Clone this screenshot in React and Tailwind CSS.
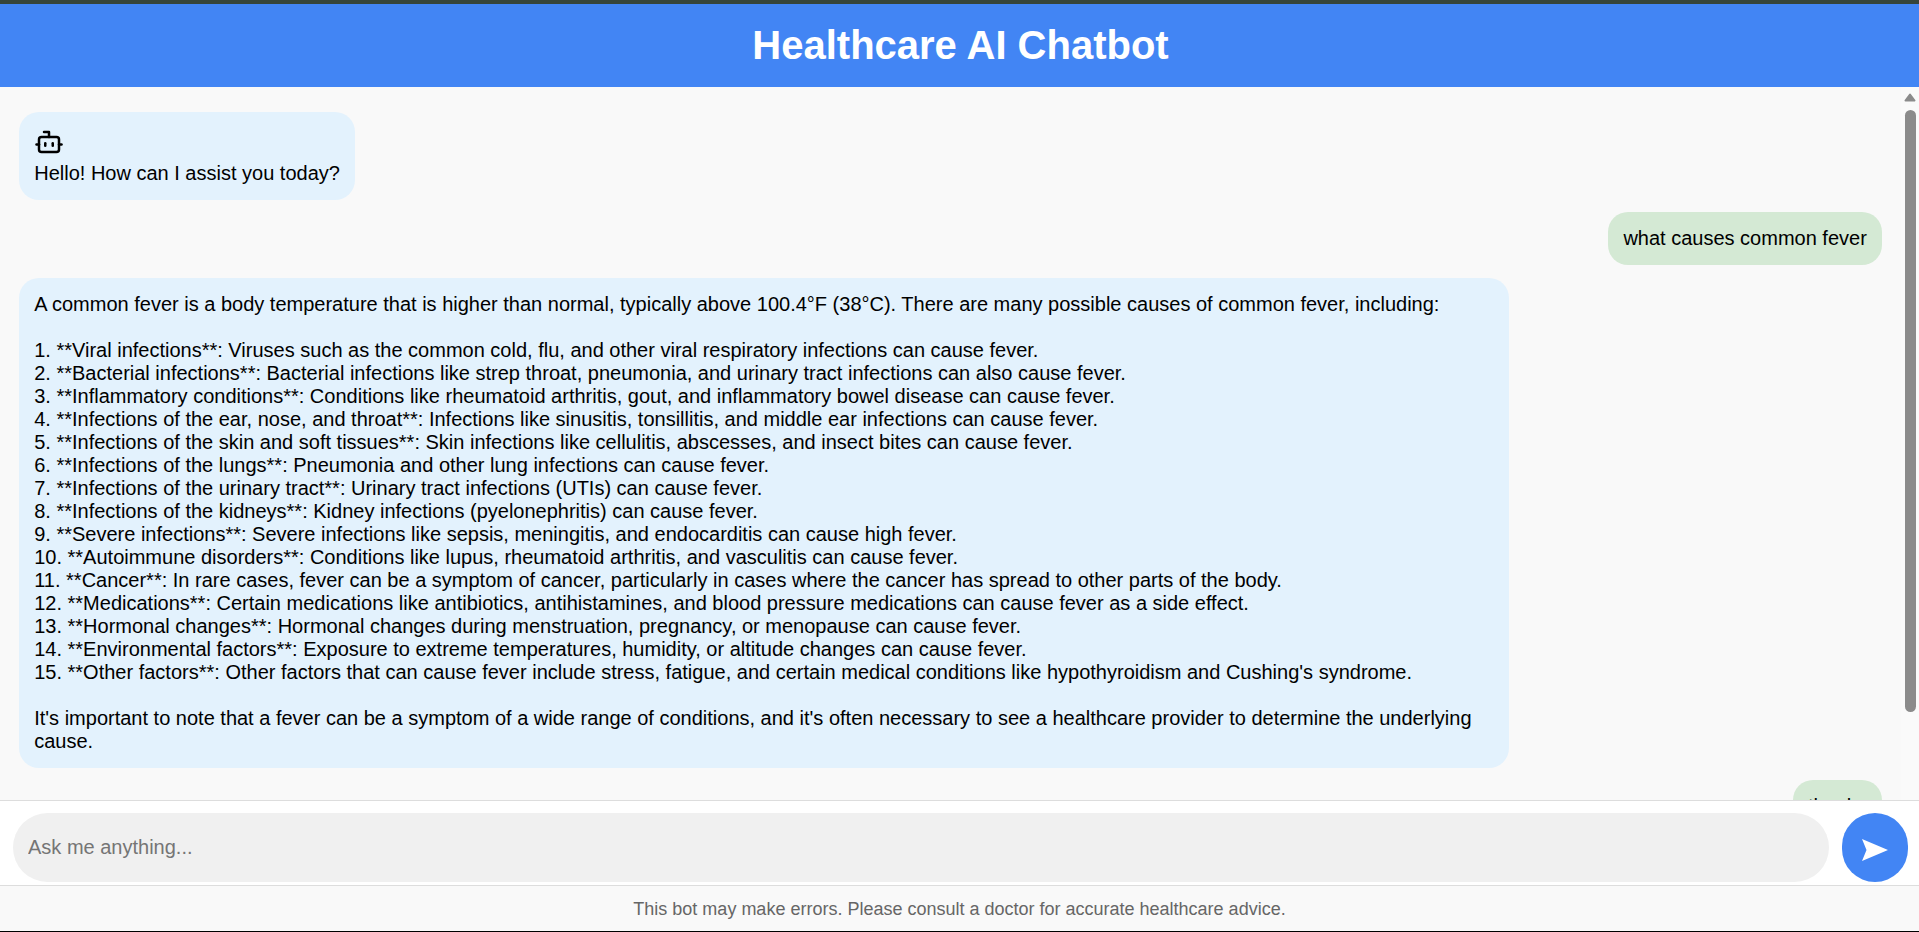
import { Bot } from "lucide-react";

const answer = `A common fever is a body temperature that is higher than normal, typically above 100.4°F (38°C). There are many possible causes of common fever, including:

1. **Viral infections**: Viruses such as the common cold, flu, and other viral respiratory infections can cause fever.
2. **Bacterial infections**: Bacterial infections like strep throat, pneumonia, and urinary tract infections can also cause fever.
3. **Inflammatory conditions**: Conditions like rheumatoid arthritis, gout, and inflammatory bowel disease can cause fever.
4. **Infections of the ear, nose, and throat**: Infections like sinusitis, tonsillitis, and middle ear infections can cause fever.
5. **Infections of the skin and soft tissues**: Skin infections like cellulitis, abscesses, and insect bites can cause fever.
6. **Infections of the lungs**: Pneumonia and other lung infections can cause fever.
7. **Infections of the urinary tract**: Urinary tract infections (UTIs) can cause fever.
8. **Infections of the kidneys**: Kidney infections (pyelonephritis) can cause fever.
9. **Severe infections**: Severe infections like sepsis, meningitis, and endocarditis can cause high fever.
10. **Autoimmune disorders**: Conditions like lupus, rheumatoid arthritis, and vasculitis can cause fever.
11. **Cancer**: In rare cases, fever can be a symptom of cancer, particularly in cases where the cancer has spread to other parts of the body.
12. **Medications**: Certain medications like antibiotics, antihistamines, and blood pressure medications can cause fever as a side effect.
13. **Hormonal changes**: Hormonal changes during menstruation, pregnancy, or menopause can cause fever.
14. **Environmental factors**: Exposure to extreme temperatures, humidity, or altitude changes can cause fever.
15. **Other factors**: Other factors that can cause fever include stress, fatigue, and certain medical conditions like hypothyroidism and Cushing's syndrome.

It's important to note that a fever can be a symptom of a wide range of conditions, and it's often necessary to see a healthcare provider to determine the underlying cause.`;

function BotBubble({ children }) {
  return (
    <div className="self-start max-w-[80%] my-[6.2px] p-[15px] rounded-[20px] bg-[#e3f2fd] text-black whitespace-pre-wrap">
      {children}
    </div>
  );
}

function UserBubble({ children }) {
  return (
    <div className="self-end max-w-[80%] my-[6.2px] p-[15px] rounded-[20px] bg-[#d4e9d4] text-black whitespace-pre-wrap">
      {children}
    </div>
  );
}

export default function App() {
  return (
    <div className="h-[932px] flex flex-col overflow-hidden bg-[#f9f9f9] text-[20px] leading-[23px] font-['Liberation_Sans',Arial,sans-serif] border-t-4 border-t-[#36453a] border-b border-b-black">
      <header className="h-[83px] shrink-0 flex items-center justify-center pb-[2px] pl-[2px] bg-[#4285f4] text-white text-[40px] leading-[46px] font-bold">
        Healthcare AI Chatbot
      </header>

      <div className="h-[713px] shrink-0 flex">
        <main className="flex-1 min-w-0 overflow-hidden">
          <div className="flex flex-col pt-[18.8px] px-[19.2px]">
            <BotBubble>
              <Bot size={30} className="mb-[5px]" />
              Hello! How can I assist you today?
            </BotBubble>
            <UserBubble>what causes common fever</UserBubble>
            <BotBubble>{answer}</BotBubble>
            <UserBubble>thanks</UserBubble>
          </div>
        </main>
        <div className="w-[18px] shrink-0 flex flex-col bg-[#fafafa] pt-[6px] pl-[3px]">
          <svg width="12" height="9" viewBox="0 0 12 9">
            <path d="M6 1.5 L10.5 7.5 H1.5 Z" fill="#8b8b8b" stroke="#8b8b8b" strokeWidth="2" strokeLinejoin="round" />
          </svg>
          <div className="w-[11px] h-[602px] mt-[8px] ml-[1px] rounded-[6px] bg-[#8b8b8b]" />
        </div>
      </div>

      <div className="shrink-0 flex gap-[13px] pt-3 pb-[3px] pl-[13px] pr-[11px] bg-white border-t border-b border-[#ddd]">
        <input
          placeholder="Ask me anything..."
          className="flex-1 min-w-0 h-[69px] px-[15px] rounded-[35px] bg-[#f0f0f0] outline-none placeholder:text-[#757575]"
        />
        <button className="w-[66px] h-[69px] shrink-0 flex items-center justify-center rounded-full bg-[#4285f4]">
          <svg className="mt-1" width="26" height="22" viewBox="0 0 26 22">
            <path d="M0 0 L26 11 L0 22 L4.5 11 Z" fill="#fff" />
          </svg>
        </button>
      </div>

      <footer className="flex-1 flex items-center justify-center pt-[2px] text-[18px] text-[#666]">
        This bot may make errors. Please consult a doctor for accurate healthcare advice.
      </footer>
    </div>
  );
}
